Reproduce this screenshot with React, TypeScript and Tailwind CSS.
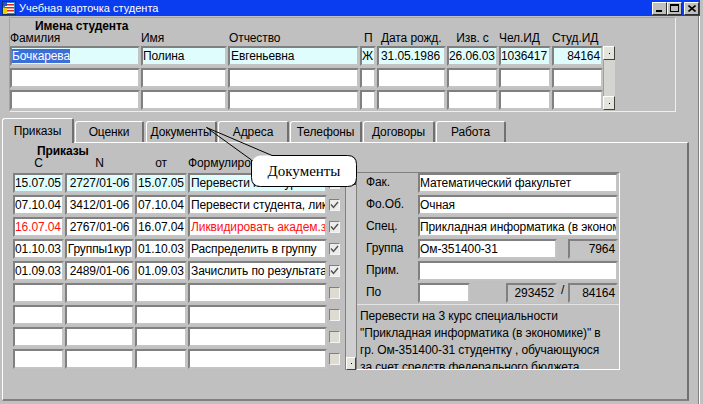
import React from "react";

const sunk =
  "box-border border-2 border-t-[#808080] border-l-[#808080] border-r-[#c4c4c4] border-b-[#c4c4c4]";

function TitleIcon() {
  return (
    <svg width="14" height="14" viewBox="0 0 14 14">
      <rect x="0.5" y="0.5" width="13" height="13" fill="#2a8ad0" stroke="#103070" />
      <rect x="3" y="2" width="9" height="10" fill="#ffffff" />
      <rect x="3" y="3" width="9" height="1.5" fill="#e02020" />
      <rect x="3" y="6" width="9" height="1.5" fill="#e02020" />
      <rect x="3" y="9" width="9" height="1.5" fill="#e02020" />
      <rect x="1" y="7" width="4" height="6" fill="#f0d000" />
      <rect x="1" y="1" width="4" height="4" fill="#3050c0" />
    </svg>
  );
}

function WinButton({ children, className }: { children: React.ReactNode; className?: string }) {
  return (
    <div
      className={`w-[15px] h-[13px] box-border bg-[#c0c0c0] border border-t-white border-l-white border-r-[#303030] border-b-[#303030] flex items-center justify-center ${className ?? ""}`}
    >
      {children}
    </div>
  );
}

function TitleBar() {
  return (
    <div className="h-[16px] w-[700px] bg-[#0a3cf0] flex items-center">
      <div className="ml-[2px] flex items-center">
        <TitleIcon />
      </div>
      <span className="ml-[3px] text-white text-[11px] leading-[16px] tracking-normal">Учебная карточка студента</span>
      <div className="ml-auto mr-[1px] flex items-center">
        <WinButton>
          <div className="w-[6px] h-[2px] bg-black mt-[5px] -ml-[1px]" />
        </WinButton>
        <WinButton>
          <div className="w-[9px] h-[8px] box-border border border-black border-t-2" />
        </WinButton>
        <WinButton className="ml-[2px]">
          <svg width="8" height="7" viewBox="0 0 8 7">
            <path d="M0.5 0.5 L7.5 6.5 M7.5 0.5 L0.5 6.5" stroke="black" strokeWidth="1.6" />
          </svg>
        </WinButton>
      </div>
    </div>
  );
}

function ScrollBtn({ className }: { className?: string }) {
  return (
    <div
      className={`box-border bg-[#e4e4dc] border border-t-white border-l-white border-r-[#404040] border-b-[#404040] flex items-center justify-center ${className ?? ""}`}
    >
      <div className="w-[1px] h-[1px] bg-black" />
    </div>
  );
}

type TopRow = {
  f: string;
  i: string;
  o: string;
  p: string;
  d: string;
  izv: string;
  ch: string;
  st: string;
  cyan?: boolean;
};

const topRows: TopRow[] = [
  {
    f: "Бочкарева",
    i: "Полина",
    o: "Евгеньевна",
    p: "Ж",
    d: "31.05.1986",
    izv: "26.06.03",
    ch: "1036417",
    st: "84164",
    cyan: true,
  },
  { f: "", i: "", o: "", p: "", d: "", izv: "", ch: "", st: "" },
  { f: "", i: "", o: "", p: "", d: "", izv: "", ch: "", st: "" },
];

function TopPanel() {
  return (
    <div className="ml-[9px] mt-[1px] w-[667px] h-[95px] box-border border border-t-[#a4a4a4] border-l-[#a4a4a4] border-r-[#eeeeee] border-b-[#eeeeee]">
      <div className="pl-[25px] mt-[2px] h-[12px] leading-[12px] font-bold">Имена студента</div>
      <div className="flex h-[13px] leading-[13px]">
        <div className="w-[130px]">Фамилия</div>
        <div className="w-[86px] ml-[1px]">Имя</div>
        <div className="w-[131px] ml-[1px] pl-[1px]">Отчество</div>
        <div className="w-[16px] ml-[1px] pl-[4px]">П</div>
        <div className="w-[69px] ml-[1px] pl-[4px]">Дата рожд.</div>
        <div className="w-[51px] ml-[1px] text-center">Изв. с</div>
        <div className="w-[52px] ml-[1px]">Чел.ИД</div>
        <div className="w-[51px] ml-[1px]">Студ.ИД</div>
      </div>
      <div className="flex mt-[1px]">
        <div className="flex flex-col gap-[2px]">
          {topRows.map((r, idx) => {
            const bg = r.cyan ? "bg-[#e0fdfd]" : "bg-white";
            const cell = `${sunk} ${bg} h-[20px] flex items-center overflow-hidden whitespace-nowrap`;
            return (
              <div key={idx} className="flex">
                <div className={`${cell} w-[130px]`}>
                  {r.f && <span className="bg-[#3c6ed8] text-white leading-[14px]">{r.f}</span>}
                </div>
                <div className={`${cell} w-[86px] ml-[1px]`}>{r.i}</div>
                <div className={`${cell} w-[131px] ml-[1px] pl-[1px]`}>{r.o}</div>
                <div className={`${cell} w-[16px] ml-[1px]`}>{r.p}</div>
                <div className={`${cell} w-[69px] ml-[1px] pl-[2px]`}>{r.d}</div>
                <div className={`${cell} w-[51px] ml-[1px]`}>{r.izv}</div>
                <div className={`${cell} w-[52px] ml-[1px]`}>{r.ch}</div>
                <div className={`${cell} w-[51px] ml-[1px] justify-end pr-[1px]`}>{r.st}</div>
              </div>
            );
          })}
        </div>
        <div className="w-[12px] h-[64px] flex flex-col">
          <ScrollBtn className="h-[14px] w-[12px]" />
          <div className="flex-1 bg-[#d4d4d0] border-l border-l-[#a0a0a0]" />
          <ScrollBtn className="h-[14px] w-[12px]" />
        </div>
      </div>
    </div>
  );
}

const tabs = [
  { label: "Приказы", cls: "w-[72px] ml-0", active: true },
  { label: "Оценки", cls: "w-[69px] ml-[1px]" },
  { label: "Документы", cls: "w-[71px] ml-[2px]" },
  { label: "Адреса", cls: "w-[71px] ml-[1px]" },
  { label: "Телефоны", cls: "w-[72px] ml-[1px]" },
  { label: "Договоры", cls: "w-[72px] ml-[1px]" },
  { label: "Работа", cls: "w-[70px] ml-[1px]" },
];

function Tabs() {
  return (
    <div className="ml-[2px] mt-[6px] h-[24px] flex items-end">
      {tabs.map((t) =>
        t.active ? (
          <div
            key={t.label}
            className={`${t.cls} relative z-10 h-[25px] -mb-px box-border bg-[#c0c0c0] border-t border-l border-r-2 border-t-white border-l-white border-r-[#707070] rounded-tl-[3px] rounded-tr-[2px] flex justify-center pt-[6px] leading-[13px]`}
          >
            {t.label}
          </div>
        ) : (
          <div
            key={t.label}
            className={`${t.cls} h-[21px] box-border bg-[#c0c0c0] border-t border-l border-r-2 border-t-white border-l-white border-r-[#707070] rounded-tl-[3px] rounded-tr-[2px] flex justify-center pt-[4px] leading-[13px]`}
          >
            {t.label}
          </div>
        )
      )}
    </div>
  );
}

type Order = { c: string; n: string; ot: string; f: string; red?: boolean; cyan?: boolean; checked?: boolean };

const orders: Order[] = [
  { c: "15.07.05", n: "2727/01-06", ot: "15.07.05", f: "Перевести на 3 курс специальности", cyan: true, checked: true },
  { c: "07.10.04", n: "3412/01-06", ot: "07.10.04", f: "Перевести студента, ликвидировавшего", checked: true },
  { c: "16.07.04", n: "2767/01-06", ot: "16.07.04", f: "Ликвидировать академ.задолженность", red: true, checked: true },
  { c: "01.10.03", n: "Группы1кур", ot: "01.10.03", f: "Распределить в группу", checked: true },
  { c: "01.09.03", n: "2489/01-06", ot: "01.09.03", f: "Зачислить по результатам", checked: true },
  { c: "", n: "", ot: "", f: "" },
  { c: "", n: "", ot: "", f: "" },
  { c: "", n: "", ot: "", f: "" },
  { c: "", n: "", ot: "", f: "" },
];

function Check({ checked }: { checked?: boolean }) {
  return (
    <div
      className={`ml-[2px] w-[11px] h-[12px] box-border border border-t-[#808080] border-l-[#808080] border-r-[#f4f4f4] border-b-[#f4f4f4] flex items-center justify-center ${checked ? "bg-[#ececea]" : "bg-[#dedcd2]"}`}
    >
      {checked && (
        <svg width="9" height="8" viewBox="0 0 9 8">
          <path d="M1 3.5 L3.5 6.5 L8 1" stroke="#505050" strokeWidth="1.4" fill="none" />
        </svg>
      )}
    </div>
  );
}

function OrdersTable() {
  return (
    <div className="ml-[10px] mt-[1px] flex flex-col gap-[2px]">
      {orders.map((o, idx) => {
        const bg = o.cyan ? "bg-[#e0fdfd]" : "bg-white";
        const cell = `${sunk} ${bg} h-[20px] flex items-center overflow-hidden whitespace-nowrap`;
        return (
          <div key={idx} className="flex items-center">
            <div className={`${cell} w-[51px] ${o.red ? "text-[#ff1010]" : ""}`}>{o.c}</div>
            <div className={`${cell} w-[69px] ml-[1px] justify-center`}>{o.n}</div>
            <div className={`${cell} w-[52px] ml-[1px] justify-center`}>{o.ot}</div>
            <div className={`${cell} w-[139px] ml-[1px] pl-[1px] ${o.red ? "text-[#ff1010]" : ""}`}>{o.f}</div>
            <Check checked={o.checked} />
          </div>
        );
      })}
    </div>
  );
}

function Label({ children }: { children: React.ReactNode }) {
  return <div className="h-[20px] pl-[9px] pb-[3px] flex items-center">{children}</div>;
}

function RightPanel() {
  const white = `${sunk} bg-white h-[20px] flex items-center overflow-hidden whitespace-nowrap`;
  const gray = `${sunk} bg-[#c4c4c4] h-[20px] flex items-center justify-end pr-[1px] overflow-hidden whitespace-nowrap`;
  return (
    <div className="w-[264px] h-[198px] box-border border-t border-l border-t-[#808080] border-l-[#808080] border-r border-b border-r-white border-b-white flex flex-col">
      <div className="flex h-[131px]">
        <div className="w-[61px] flex flex-col gap-[2px]">
          <Label>Фак.</Label>
          <Label>Фо.Об.</Label>
          <Label>Спец.</Label>
          <Label>Группа</Label>
          <Label>Прим.</Label>
          <Label>По</Label>
        </div>
        <div className="flex flex-col gap-[2px]">
          <div className={`${white} w-[200px]`}>Математический факультет</div>
          <div className={`${white} w-[200px]`}>Очная</div>
          <div className={`${white} w-[200px]`}>Прикладная информатика (в экономике)</div>
          <div className="flex">
            <div className={`${white} w-[139px]`}>Ом-351400-31</div>
            <div className={`${gray} w-[50px] ml-[11px]`}>7964</div>
          </div>
          <div className={`${white} w-[200px]`} />
          <div className="flex">
            <div className={`${white} w-[52px]`} />
            <div className={`${gray} w-[51px] ml-[36px]`}>293452</div>
            <div className="w-[11px] h-[20px] flex justify-center leading-[14px]">/</div>
            <div className={`${gray} w-[50px]`}>84164</div>
          </div>
        </div>
      </div>
      <div className="flex-1 border-t border-t-[#e4e4e4] pl-[3px] pt-[3px] leading-[17px] whitespace-nowrap overflow-hidden">
        Перевести на 3 курс специальности
        <br />
        "Прикладная информатика (в экономике)" в
        <br />
        гр. Ом-351400-31 студентку , обучающуюся
        <br />
        за счет средств федерального бюджета
      </div>
    </div>
  );
}

function TabPanel() {
  return (
    <div className="ml-[2px] w-[687px] h-[259px] box-border border-t border-l border-t-white border-l-white border-r-2 border-b-2 border-r-[#707070] border-b-[#808080]">
      <div className="ml-[34px] mt-[2px] h-[12px] leading-[12px] font-bold">Приказы</div>
      <div className="ml-[10px] flex h-[13px] leading-[13px]">
        <div className="w-[51px] text-center">С</div>
        <div className="w-[69px] ml-[1px] text-center">N</div>
        <div className="w-[52px] ml-[1px] text-center">от</div>
        <div className="ml-[1px] whitespace-nowrap">Формулировка</div>
      </div>
      <div className="mt-[2px] flex items-start">
        <OrdersTable />
        <div className="ml-[5px] w-[11px] h-[198px] flex flex-col box-border border-l border-l-[#808080] bg-[#cfcfcf]">
          <ScrollBtn className="h-[13px] w-[10px]" />
          <div className="flex-1" />
          <ScrollBtn className="h-[13px] w-[10px]" />
        </div>
        <RightPanel />
      </div>
    </div>
  );
}

function Callout() {
  return (
    <>
      <svg width="703" height="404" className="absolute left-0 top-0 pointer-events-none">
        <rect x="251.5" y="155.5" width="105" height="31" rx="9" ry="9" fill="white" />
        <path
          d="M272 155.5 H347.5 Q356.5 155.5 356.5 164.5 V177.5 Q356.5 186.5 347.5 186.5 H260.5 Q251.5 186.5 251.5 177.5 V160 L206.5 127.5 L272 155.5"
          fill="none"
          stroke="black"
          strokeWidth="1"
        />
      </svg>
      <div className="absolute left-[251px] top-[156px] w-[106px] h-[30px] flex items-center justify-center font-['Liberation_Serif',serif] text-[15px] tracking-normal text-black">
        Документы
      </div>
    </>
  );
}

export default function App() {
  return (
    <div className="relative w-[703px] h-[404px] overflow-hidden bg-[#c0c0c0] font-['Liberation_Sans',Arial,sans-serif] text-[12px] tracking-[-0.1px] text-black">
      <TitleBar />
      <div className="flex">
        <div className="w-[698px]">
          <TopPanel />
          <Tabs />
          <TabPanel />
        </div>
        <div className="w-[1px] h-[388px] bg-[#808080]" />
        <div className="w-[1px] h-[388px] bg-white" />
      </div>
      <Callout />
    </div>
  );
}
